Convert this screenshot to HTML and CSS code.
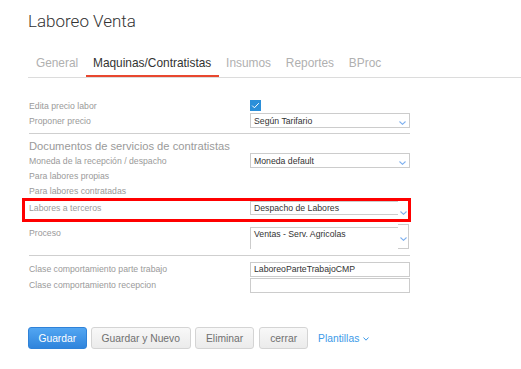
FILE: index.html
```html
<!DOCTYPE html>
<html lang="es">
<head>
<meta charset="utf-8">
<title>Laboreo Venta</title>
<link rel="stylesheet" href="styles.css">
</head>
<body>
<div class="page">
  <h1 class="title">Laboreo Venta</h1>
  <nav class="tabs">
    <a class="tab">General</a>
    <a class="tab active">Maquinas/Contratistas</a>
    <a class="tab">Insumos</a>
    <a class="tab">Reportes</a>
    <a class="tab">BProc</a>
  </nav>
  <form class="form">
    <div class="row">
      <label class="lbl">Edita precio labor</label>
      <span class="check"><svg width="11" height="11" viewBox="0 0 11 11"><rect width="11" height="11" fill="#2b8fd9"/><polyline points="2.2,5.6 4.4,7.8 8.8,3.2" fill="none" stroke="#fff" stroke-width="1"/></svg></span>
    </div>
    <div class="row">
      <label class="lbl">Proponer precio</label>
      <div class="select"><span>Según Tarifario</span><svg class="chev" width="7" height="4" viewBox="0 0 7 4"><polyline points="0.5,0.5 3.5,3.3 6.5,0.5" fill="none" stroke="#7fb0ee" stroke-width="1.1"/></svg></div>
    </div>
    <hr class="sep sep-a">
    <h2 class="section">Documentos de servicios de contratistas</h2>
    <div class="row">
      <label class="lbl">Moneda de la recepción / despacho</label>
      <div class="select"><span>Moneda default</span><svg class="chev" width="7" height="4" viewBox="0 0 7 4"><polyline points="0.5,0.5 3.5,3.3 6.5,0.5" fill="none" stroke="#7fb0ee" stroke-width="1.1"/></svg></div>
    </div>
    <div class="row"><label class="lbl">Para labores propias</label></div>
    <div class="row"><label class="lbl">Para labores contratadas</label></div>
    <div class="row row-combo terceros">
      <label class="lbl">Labores a terceros</label>
      <div class="combo">
        <div class="combo-input closed"><span>Despacho de Labores</span></div>
        <div class="combo-btn"><svg class="chev" width="7" height="4" viewBox="0 0 7 4"><polyline points="0.5,0.5 3.5,3.3 6.5,0.5" fill="none" stroke="#7fb0ee" stroke-width="1.1"/></svg></div>
      </div>
    </div>
    <div class="row row-combo proceso">
      <label class="lbl">Proceso</label>
      <div class="combo">
        <div class="combo-input"><span>Ventas - Serv. Agricolas</span></div>
        <div class="combo-btn"><svg class="chev" width="7" height="4" viewBox="0 0 7 4"><polyline points="0.5,0.5 3.5,3.3 6.5,0.5" fill="none" stroke="#7fb0ee" stroke-width="1.1"/></svg></div>
      </div>
    </div>
    <hr class="sep sep-b">
    <div class="row row-input first">
      <label class="lbl">Clase comportamiento parte trabajo</label>
      <div class="input">LaboreoParteTrabajoCMP</div>
    </div>
    <div class="row row-input">
      <label class="lbl">Clase comportamiento recepcion</label>
      <div class="input"></div>
    </div>
    <div class="highlight"></div>
  </form>
  <div class="actions">
    <button class="btn primary" type="button">Guardar</button>
    <button class="btn" type="button">Guardar y Nuevo</button>
    <button class="btn" type="button">Eliminar</button>
    <button class="btn close" type="button">cerrar</button>
    <a class="templates">Plantillas<svg width="6" height="4" viewBox="0 0 6 4"><polyline points="0.5,0.5 3,3.2 5.5,0.5" fill="none" stroke="#3d9ae8" stroke-width="1"/></svg></a>
  </div>
</div>
</body>
</html>
```

FILE: styles.css
```css
html, body {
  margin: 0;
  padding: 0;
  background: #fff;
}

body {
  font-family: "Liberation Sans", Arial, sans-serif;
  color: #333;
}

.page {
  padding-left: 28px;
}

.title {
  margin: 11px 0 0;
  font-family: Roboto, "Liberation Sans", sans-serif;
  font-weight: 300;
  font-size: 17px;
  line-height: 20px;
  color: #333;
}

.tabs {
  display: flex;
  margin-top: 25px;
  padding-left: 0.5px;
  border-bottom: 1px solid #dcdcdc;
}

.tab {
  padding: 0 7.4px 5px;
  font-size: 11.9px;
  line-height: 14px;
  color: #b0b0b0;
  border-bottom: 2px solid transparent;
}

.tab.active {
  color: #333;
  border-bottom-color: #e8472f;
}

.form {
  position: relative;
  margin: 20px 0 0 1px;
  width: 381px;
}

.row {
  display: grid;
  grid-template-columns: 221px 160px;
  align-items: center;
  height: 15px;
}

.lbl {
  font-size: 8.7px;
  line-height: 14px;
  color: #9a9a9a;
  white-space: nowrap;
}

.check {
  display: flex;
  height: 11px;
}

.select {
  box-sizing: border-box;
  height: 15px;
  border: 1px solid #cccccc;
  background: #fff;
  display: flex;
  align-items: center;
  justify-content: space-between;
  padding: 0 3px 0 3px;
  font-size: 8.7px;
  color: #333;
}

.select .chev {
  margin-top: 5px;
}

.sep {
  border: 0;
  border-top: 1px solid #cfcfcf;
  height: 0;
  margin: 0;
}

.sep-a {
  margin-top: 5px;
}

.sep-b {
  margin-top: 6px;
}

.section {
  margin: 5px 0 0;
  font-weight: normal;
  font-size: 11.2px;
  line-height: 14px;
  color: #9a9a9a;
  white-space: nowrap;
}

.row-combo {
  align-items: start;
}

.terceros {
  height: 26px;
}

.terceros .lbl {
  margin-top: 3px;
}

.proceso {
  height: 25px;
}

.proceso .lbl {
  margin-top: 2px;
}

.combo {
  display: flex;
  width: 159px;
}

.combo-input {
  box-sizing: border-box;
  flex: 1;
  border-top: 1px solid #cccccc;
  border-left: 1px solid #cccccc;
  padding-left: 3px;
  font-size: 8.7px;
  line-height: 12px;
  color: #333;
}

.terceros .combo {
  margin-top: 1px;
}

.terceros .combo-input {
  margin-top: 2px;
  height: 14px;
  border-bottom: 1px solid #cccccc;
}

.proceso .combo-input {
  margin-top: 3px;
  height: 22px;
}

.combo-btn {
  box-sizing: border-box;
  width: 11px;
  border: 1px solid #cccccc;
  border-left: 0;
  display: flex;
  justify-content: center;
}

.terceros .combo-btn {
  height: 23px;
  padding-top: 11px;
}

.proceso .combo-btn {
  height: 25px;
  padding-top: 12px;
}

.row-input {
  height: 16px;
  align-items: start;
}

.row-input.first {
  margin-top: 6px;
}

.row-input .lbl {
  line-height: 15px;
}

.input {
  box-sizing: border-box;
  height: 15px;
  border: 1px solid #cccccc;
  padding-left: 3px;
  font-size: 8.7px;
  line-height: 13px;
  color: #333;
}

.highlight {
  position: absolute;
  left: -7px;
  top: 100px;
  width: 389px;
  height: 24px;
  box-sizing: border-box;
  border: 3px solid #ff0000;
  pointer-events: none;
}

.actions {
  display: flex;
  align-items: center;
  gap: 4px;
  margin-top: 33px;
}

.btn {
  box-sizing: border-box;
  height: 22px;
  padding: 0 10px;
  border: 1px solid #d4d4d4;
  border-radius: 3px;
  background: linear-gradient(#f8f8f8, #ebebeb);
  font-family: "Liberation Sans", Arial, sans-serif;
  font-size: 10.3px;
  color: #707070;
}

.btn.primary {
  padding: 0 9.4px;
  border-color: #2f82d8;
  background: linear-gradient(#52a6f2, #2f84dc);
  color: #fff;
}

.btn.close {
  margin-left: 1px;
}

.templates {
  margin-left: 6px;
  display: flex;
  align-items: center;
  gap: 4px;
  font-size: 10.3px;
  color: #3d9ae8;
}

.templates svg {
  margin-top: 2px;
}
```
